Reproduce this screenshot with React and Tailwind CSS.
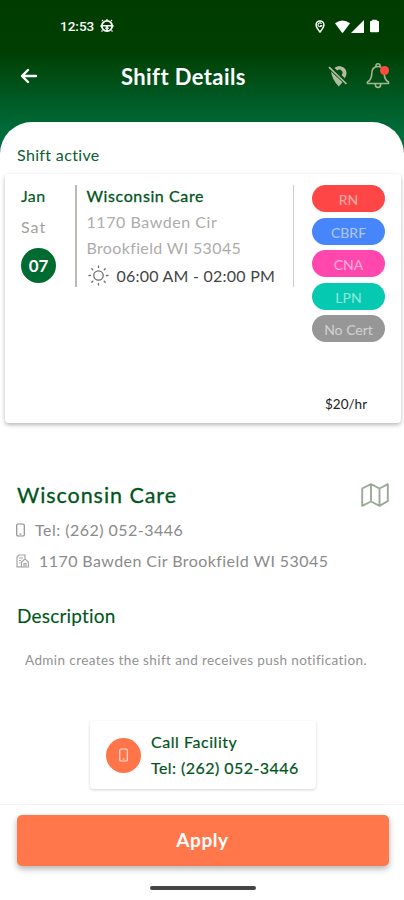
import clsx from 'clsx'

const BADGES = [
  { label: 'RN', color: 'bg-[#ff4646]' },
  { label: 'CBRF', color: 'bg-[#4785fa]' },
  { label: 'CNA', color: 'bg-[#ff47ad]' },
  { label: 'LPN', color: 'bg-[#05c9b0]' },
  { label: 'No Cert', color: 'bg-[#979797]' },
]

function PhoneIcon({ className }) {
  return (
    <svg viewBox="0 0 10 15" fill="none" stroke="currentColor" strokeWidth="1.3" className={className}>
      <rect x="0.8" y="0.8" width="8.4" height="13.4" rx="1.5" />
      <path d="M4 12h2" />
    </svg>
  )
}

function StatusBar() {
  return (
    <div className="flex h-[52px] items-center pl-[60px] pr-[25px] text-white">
      <span className="w-[35px] whitespace-nowrap font-['Roboto'] text-[13.5px] font-medium">12:53</span>
      <svg viewBox="0 0 14 14" className="ml-[5px] size-[14px]" fill="none" stroke="currentColor">
        <circle cx="7" cy="7" r="5.2" strokeWidth="1.8" />
        <path d="M2 6.7h10M7 7v5" strokeWidth="1.6" />
        <path d="M5 9.2h4" strokeWidth="1" />
        <path d="M7 0v2M3 2 2 1M11 2l1-1M2.500 11.500l-1 1M11.500 11.500l1 1M0 7h2M12 7h2" strokeWidth="1.2" />
      </svg>
      <div className="ml-auto flex items-center">
        <svg viewBox="0 0 10 13" className="mr-[1px] h-[13px] w-[10px]" fill="none" stroke="currentColor">
          <path d="M5 12C2.7 9 1.1 7.2 1.1 4.9a3.9 3.9 0 0 1 7.8 0C8.9 7.2 7.3 9 5 12Z" strokeWidth="1.5" />
          <path d="M6.5 3.7A1.9 1.9 0 1 0 6.7 5.5H5.2" strokeWidth="1.1" />
        </svg>
        <svg viewBox="0 0 15 13" className="ml-[9px] h-[13px] w-[15px]" fill="currentColor">
          <path d="M0 3.2Q7.5-2 15 3.2L8.200 12.500Q7.500 13 6.800 12.500Z" />
        </svg>
        <svg viewBox="0 0 13 13" className="ml-[1px] h-[13px] w-[13px]" fill="currentColor">
          <path d="M13 0v13H0Z" />
        </svg>
        <svg viewBox="0 0 10 14" className="ml-[6px] h-[14px] w-[9px]" fill="currentColor">
          <path d="M2.500 1.200V0h5v1.200h1A1.500 1.500 0 0 1 10 2.700v9.800A1.500 1.500 0 0 1 8.500 14h-7A1.500 1.500 0 0 1 0 12.500V2.700A1.500 1.500 0 0 1 1.500 1.200Z" />
        </svg>
      </div>
    </div>
  )
}

function TopBar() {
  return (
    <div className="flex h-[70px] items-start pl-[20px] pr-[14px] pt-[10px]">
      <svg viewBox="0 0 18 16" className="mt-[6px] h-[16px] w-[18px] text-white" fill="none" stroke="currentColor" strokeWidth="2.4" strokeLinecap="round" strokeLinejoin="round">
        <path d="M16 8H2M8 2 2 8l6 6" />
      </svg>
      <h1 className="ml-[83px] mt-[1px] w-[190px] whitespace-nowrap text-[22px] font-bold leading-[28px] tracking-[0.4px] text-white">Shift Details</h1>
      <svg viewBox="0 0 20 22" className="ml-[17px] mt-[3px] h-[22px] w-[20px] text-[#b0bda2]" fill="currentColor">
        <path d="M3 6.5 14.500 17.200Q12.500 19.500 10.800 21.500Q4 14.500 3 6.500Z" />
        <path d="M6.500 3C10-.5 18.500 1 18.500 8c0 2-.8 3.800-1.700 5.300l-3.300-3.300A3 3 0 0 0 9.300 5.600Z" />
        <path d="m1 2.200 17.500 16.800" fill="none" stroke="currentColor" strokeWidth="1.700" />
      </svg>
      <div className="relative ml-auto mt-[1px]">
        <svg viewBox="0 0 24 26" className="h-[26px] w-[24px] text-[#a3b68f]" fill="none" stroke="currentColor" strokeWidth="1.6" strokeLinejoin="round">
          <path d="M12 3.500c-4.500 0-6.300 3.500-6.300 7.500 0 4.500-1 6.300-4.200 8v1.500h21V19c-3.200-1.700-4.200-3.500-4.200-8 0-4-1.800-7.500-6.300-7.500Z" />
          <path d="M10 3.700V2.800a2 2 0 0 1 4 0v.9M9.300 21a2.700 3.500 0 0 0 5.400 0" />
        </svg>
        <span className="absolute right-[1px] top-[3px] size-[9px] rounded-full bg-[#ff4a3d]" />
      </div>
    </div>
  )
}

function ShiftCard() {
  return (
    <div className="ml-[5px] flex h-[249px] w-[396px] rounded-[4px] bg-white pt-[11px] shadow-[0_2px_4px_rgba(0,0,0,0.28)]">
      <div className="flex w-[70px] flex-col pl-[16px]">
        <span className="text-[16px] leading-[22px] tracking-[0.4px] text-[#045a22] [-webkit-text-stroke:0.2px_#045a22]">Jan</span>
        <span className="mt-[9px] text-[16px] leading-[22px] tracking-[1px] text-[#a2a2a0]">Sat</span>
        <span className="mt-[10px] flex size-[35px] items-center justify-center rounded-full bg-[#006b30] text-[17px] font-bold text-white">07</span>
      </div>
      <div className="h-[102px] w-[1.5px] bg-[#bcbcb6]" />
      <div className="flex w-[216px] flex-col whitespace-nowrap pl-[10px] text-[16px]">
        <span className="mt-[-1px] leading-[23px] tracking-[0.6px] text-[#00551a] [-webkit-text-stroke:0.3px_#00551a]">Wisconsin Care</span>
        <span className="mt-[3px] leading-[23px] tracking-[0.55px] text-[#acacaa]">1170 Bawden Cir</span>
        <span className="mt-[3px] leading-[23px] tracking-[0.35px] text-[#acacaa]">Brookfield WI 53045</span>
        <div className="mt-[5px] flex items-center">
          <svg viewBox="0 0 21 21" className="ml-[1px] size-[21px] text-[#6d6d6d]" fill="none" stroke="currentColor" strokeWidth="1.3" strokeLinecap="round">
            <circle cx="10.5" cy="10.5" r="4.7" />
            <path d="M10.5 1v1.500M10.500 18.500V20M1 10.500h1.500M18.500 10.500H20M3.800 3.800l1 1M16.200 16.200l1 1M3.800 17.200l1-1M16.200 4.800l1-1" />
          </svg>
          <span className="ml-[8px] leading-[23px] tracking-[0.23px] text-[#454545]">06:00 AM - 02:00 PM</span>
        </div>
      </div>
      <div className="h-[102px] w-[1.5px] bg-[#cccccc]" />
      <div className="ml-[18px] flex w-[73px] flex-col gap-[5.5px]">
        {BADGES.map(badge => (
          <div key={badge.label} className={clsx('flex h-[27px] justify-center whitespace-nowrap rounded-full pt-[5px] text-[14px] leading-[20px] text-white/55', badge.color)}>
            {badge.label}
          </div>
        ))}
        <span className="mt-[47px] pl-[13px] text-[13.5px] leading-[19px] text-[#222222]">$20/hr</span>
      </div>
    </div>
  )
}

function FacilityInfo() {
  return (
    <section className="px-[16px] pt-[58px]">
      <div className="flex h-[28px] items-center justify-between">
        <h2 className="pl-[1px] text-[21.5px] leading-[28px] tracking-[0.95px] text-[#00551a] [-webkit-text-stroke:0.3px_#00551a]">Wisconsin Care</h2>
        <svg viewBox="0 0 28 24" className="mr-[-1px] h-[24px] w-[28px] text-[#9aab95]" fill="none" stroke="currentColor" strokeWidth="1.9" strokeLinejoin="round">
          <path d="M1.200 5.500 10 1.200l8.500 4.300 8.300-4.300v17L18.500 22.800 10 18.500 1.200 22.800ZM10 1.200v17.300M18.500 5.500v17.300" />
        </svg>
      </div>
      <div className="mt-[9px] flex h-[24px] items-center text-[16px] tracking-[0.48px] text-[#8b8b8b]">
        <PhoneIcon className="h-[14px] w-[9px]" />
        <span className="ml-[10px]">Tel: (262) 052-3446</span>
      </div>
      <div className="mt-[7px] flex h-[24px] items-center text-[16px] tracking-[0.43px] text-[#8b8b8b]">
        <svg viewBox="0 0 13 14" className="h-[14px] w-[13px] text-[#a5a5a5]" fill="none" stroke="currentColor">
          <path d="M9 4.500V1H3L1 3v9.800h4.500M3 4h4M3 6.500h2M3 9h1.500" strokeWidth="1.2" />
          <path d="M5.500 8 9 5l3.500 3v5h-7ZM8 13V9.500h2V13" strokeWidth="1.2" />
        </svg>
        <span className="ml-[10px] whitespace-nowrap">1170 Bawden Cir Brookfield WI 53045</span>
      </div>
      <h3 className="mt-[30px] pl-[1px] text-[19px] leading-[26px] tracking-[0.2px] text-[#00551a] [-webkit-text-stroke:0.1px_#00551a]">Description</h3>
      <p className="mt-[21px] whitespace-nowrap pl-[9px] text-[13.5px] leading-[20px] tracking-[0.4px] text-[#929292]">
        Admin creates the shift and receives push notification.
      </p>
    </section>
  )
}

function CallCard() {
  return (
    <div className="ml-[90px] mt-[51px] flex h-[68px] w-[226px] items-center rounded-[4px] bg-white pl-[16px] shadow-[0_1px_3px_rgba(0,0,0,0.18)]">
      <span className="flex size-[35px] items-center justify-center rounded-full bg-[#ff7549] text-[#ffe3d8]">
        <PhoneIcon className="h-[14px] w-[9px]" />
      </span>
      <div className="ml-[10px] flex flex-col whitespace-nowrap text-[16px] leading-[26px] text-[#00551a] [-webkit-text-stroke:0.2px_#00551a]">
        <span className="tracking-[0.55px]">Call Facility</span>
        <span className="tracking-[0.45px]">Tel: (262) 052-3446</span>
      </div>
    </div>
  )
}

export default function App() {
  return (
    <div className="flex h-[900px] w-[404px] flex-col overflow-hidden bg-[linear-gradient(to_bottom,#003c00_0px,#003e02_50px,#006e3c_135px,#007040_150px)] font-['Lato',sans-serif]">
      <StatusBar />
      <TopBar />
      <main className="flex flex-1 flex-col rounded-t-[32px] bg-white">
        <p className="h-[52px] pl-[17px] pt-[22px] text-[16px] leading-[22px] tracking-[0.35px] text-[#0a6030]">Shift active</p>
        <ShiftCard />
        <FacilityInfo />
        <CallCard />
        <footer className="mt-auto flex h-[96px] flex-col items-center border-t border-[#f0f3f3] pl-[1px] pt-[10px]">
          <button className="h-[51px] w-[372px] rounded-[5px] bg-[#ff774b] text-[19px] font-bold tracking-[0.6px] text-white shadow-[0_3px_6px_rgba(0,0,0,0.3)]">
            Apply
          </button>
          <div className="mt-[20px] h-[4px] w-[106px] rounded-full bg-[#444444]" />
        </footer>
      </main>
    </div>
  )
}
